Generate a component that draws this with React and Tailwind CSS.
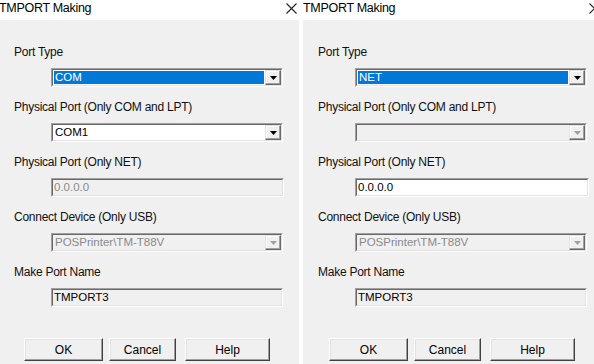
import React from "react";

const font = { fontFamily: '"Liberation Sans", Arial, sans-serif' };

function Arrow({ disabled }) {
  return (
    <div className="w-[16px] h-full flex items-center justify-center bg-[#f0f0f0] border-t border-l border-t-[#e3e3e3] border-l-[#e3e3e3] border-b border-r border-b-[#696969] border-r-[#696969] shadow-[inset_-1px_-1px_0_#a0a0a0,inset_1px_1px_0_#ffffff]">
      <svg width="7" height="4" viewBox="0 0 7 4">
        <polygon points="0,0 7,0 3.5,4" fill={disabled ? "#a0a0a0" : "#000"} />
      </svg>
    </div>
  );
}

function Sunken({ children, bg = "bg-white", width = "w-[232px]" }) {
  return (
    <div className={`${width} h-[19px] border-t border-l border-t-[#a0a0a0] border-l-[#a0a0a0] border-b border-r border-b-[#ffffff] border-r-[#ffffff]`}>
      <div className={`w-full h-full ${bg} border-t border-l border-t-[#696969] border-l-[#696969] border-b border-r border-b-[#e3e3e3] border-r-[#e3e3e3] flex items-stretch`}>
        {children}
      </div>
    </div>
  );
}

function Combo({ value, selected, disabled }) {
  return (
    <Sunken bg={disabled ? "bg-[#f0f0f0]" : "bg-white"}>
      <div className="flex-1 p-[1px] flex items-stretch">
        <div
          className={`flex-1 flex items-center pl-[1px] text-[11.5px] leading-none ${
            selected ? "bg-[#0078d7] text-white" : disabled ? "text-[#8a8a8a]" : "text-black"
          }`}
        >
          {value}
        </div>
      </div>
      <Arrow disabled={disabled} />
    </Sunken>
  );
}

function Edit({ value, white, grayText, width }) {
  return (
    <Sunken bg={white ? "bg-white" : "bg-[#f0f0f0]"} width={width}>
      <div className={`flex-1 flex items-center pl-[1px] text-[11.5px] leading-none ${grayText ? "text-[#8a8a8a]" : "text-black"}`}>
        {value}
      </div>
    </Sunken>
  );
}

function Label({ children }) {
  return (
    <div className="h-[13px] text-[12px] leading-[13px] tracking-[-0.25px] text-[#111] whitespace-nowrap">{children}</div>
  );
}

function Row({ label, children, last }) {
  return (
    <div className={`flex flex-col ${last ? "" : "mb-[14px]"}`}>
      <Label>{label}</Label>
      <div className="mt-[9px] pl-[37px]">{children}</div>
    </div>
  );
}

function Button({ children, w }) {
  return (
    <div
      className={`${w} h-[23px] flex items-center justify-center text-[12px] text-black bg-[#f0f0f0] border-t border-l border-t-[#ffffff] border-l-[#ffffff] border-b border-r border-b-[#404040] border-r-[#404040] shadow-[inset_-1px_-1px_0_#a0a0a0,inset_1px_1px_0_#e3e3e3]`}
    >
      {children}
    </div>
  );
}

function CloseX() {
  return (
    <svg width="11" height="11" viewBox="0 0 11 11" className="shrink-0">
      <path d="M0.5 0.5 L10.5 10.5 M10.5 0.5 L0.5 10.5" stroke="#222" strokeWidth="1.1" fill="none" />
    </svg>
  );
}

function Dialog({ net, width, titleOffset, labelPad, closeRight }) {
  return (
    <div className={`${width} h-full bg-[#f0f0f0] flex flex-col overflow-hidden`}>
      <div className="h-[20px] bg-white flex items-center justify-between pb-[4px]">
        <div className={`${titleOffset} text-[12.5px] leading-none tracking-[-0.3px] text-black whitespace-nowrap`}>TMPORT Making</div>
        <div className={`${closeRight} flex items-center`}>
          <CloseX />
        </div>
      </div>
      <div className={`flex flex-col pt-[26px] ${labelPad}`}>
        <Row label="Port Type">
          <Combo value={net ? "NET" : "COM"} selected />
        </Row>
        <Row label="Physical Port (Only COM and LPT)">
          {net ? <Combo value="" disabled /> : <Combo value="COM1" />}
        </Row>
        <Row label="Physical Port (Only NET)">
          {net ? (
            <Edit value="0.0.0.0" white width="w-[234px]" />
          ) : (
            <Edit value="0.0.0.0" grayText width="w-[233px]" />
          )}
        </Row>
        <Row label="Connect Device (Only USB)">
          <Combo value="POSPrinter\TM-T88V" disabled />
        </Row>
        <Row label="Make Port Name" last>
          <Edit value="TMPORT3" />
        </Row>
      </div>
      <div className={`flex mt-[31px] ${net ? "pl-[26px]" : "pl-[24px]"}`}>
        <Button w="w-[79px]">OK</Button>
        <div className="w-[6px]" />
        <Button w="w-[67px]">Cancel</Button>
        <div className="w-[9px]" />
        <Button w="w-[85px]">Help</Button>
      </div>
    </div>
  );
}

export default function App() {
  return (
    <div className="w-[594px] h-[364px] flex bg-white overflow-hidden" style={font}>
      <Dialog width="w-[299px]" titleOffset="ml-[-1px]" labelPad="pl-[14px]" closeRight="mr-[2px]" />
      <div className="w-[4px] h-full bg-white" />
      <Dialog net width="w-[291px]" titleOffset="ml-[0px]" labelPad="pl-[15px]" closeRight="mr-[-6px]" />
    </div>
  );
}
